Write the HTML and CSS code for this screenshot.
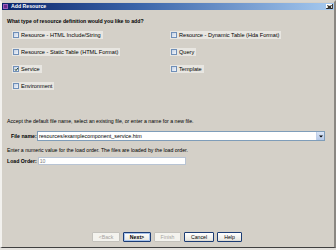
FILE: index.html
```html
<!DOCTYPE html>
<html>
<head>
<meta charset="utf-8">
<link rel="stylesheet" href="styles.css">
</head>
<body>
<div class="window">
  <div class="titlebar">
    <span class="app-icon"></span>
    <span class="title">Add Resource</span>
    <span class="close">
      <svg width="5" height="4" viewBox="0 0 5 4"><path d="M0.5 0.5 L4.5 3.5 M4.5 0.5 L0.5 3.5" stroke="#000" stroke-width="1"/></svg>
    </span>
  </div>
  <div class="content">
    <div class="heading">What type of resource definition would you like to add?</div>
    <div class="choices">
      <label class="choice"><span class="box"></span><span>Resource - HTML Include/String</span></label>
      <label class="choice"><span class="box"></span><span>Resource - Dynamic Table (Hda Format)</span></label>
      <label class="choice"><span class="box"></span><span>Resource - Static Table (HTML Format)</span></label>
      <label class="choice"><span class="box"></span><span>Query</span></label>
      <label class="choice"><span class="box checked"><svg width="5" height="5" viewBox="0 0 5 5"><path d="M1 2.3 L2 3.5 L4 1" stroke="#1f3f1f" stroke-width="1" fill="none"/></svg></span><span>Service</span></label>
      <label class="choice"><span class="box"></span><span>Template</span></label>
      <label class="choice"><span class="box"></span><span>Environment</span></label>
    </div>
    <div class="note note-file">Accept the default file name, select an existing file, or enter a name for a new file.</div>
    <div class="field-row file-row">
      <span class="field-label file-label">File name:</span>
      <div class="combo">
        <span class="combo-text">resources/examplecomponent_service.htm</span>
        <span class="combo-btn"><svg width="4" height="3" viewBox="0 0 4 3"><path d="M0 0.5 H4 L2 2.5 Z" fill="#000"/></svg></span>
      </div>
    </div>
    <div class="note note-order">Enter a numeric value for the load order. The files are loaded by the load order.</div>
    <div class="field-row order-row">
      <span class="field-label">Load Order:</span>
      <div class="order-input">10</div>
    </div>
    <div class="buttons">
      <button class="btn btn-back" disabled>&lt;Back</button>
      <button class="btn btn-next default">Next&gt;</button>
      <button class="btn btn-finish" disabled>Finish</button>
      <button class="btn btn-cancel">Cancel</button>
      <button class="btn btn-help">Help</button>
    </div>
  </div>
</div>
</body>
</html>
```
FILE: styles.css
```css
html, body {
  margin: 0;
  padding: 0;
}
body {
  width: 336px;
  height: 250px;
  overflow: hidden;
  background: #e4e2de;
  font-family: "Liberation Sans", Arial, sans-serif;
  font-size: 5.2px;
  color: #000;
}
.window {
  box-sizing: border-box;
  width: 336px;
  height: 248px;
  background: #d4d0c8;
  border-style: solid;
  border-width: 2px 2px 1px 2px;
  border-color: #d8d5cf #8a8782 #404040 #f2f1ee;
  padding-top: 1px;
  display: flex;
  flex-direction: column;
}
.titlebar {
  height: 7px;
  background: linear-gradient(to right, #0a246a 0%, #3a63a8 40%, #a6caf0 100%);
  display: flex;
  align-items: center;
  color: #fff;
}
.app-icon {
  width: 5px;
  height: 5px;
  margin-left: 1px;
  background: #6a2c8c;
  box-shadow: inset 0 0 0 1px #9a5cbc;
}
.title {
  margin-left: 3px;
  font-weight: bold;
  font-size: 5.2px;
  line-height: 7px;
}
.close {
  margin-left: auto;
  margin-right: 1px;
  width: 7px;
  height: 5px;
  background: #d4d0c8;
  box-shadow: inset -1px -1px 0 #404040, inset 1px 1px 0 #fff;
  display: flex;
  align-items: center;
  justify-content: center;
}
.close svg { display: block; }
.content {
  flex: 1;
  display: flex;
  flex-direction: column;
  padding: 0 0 5px 5px;
}
.heading {
  margin-top: 8px;
  line-height: 6px;
  font-weight: bold;
}
.choices {
  margin-top: 7px;
  padding-left: 5px;
  display: grid;
  grid-template-columns: 158px 1fr;
  row-gap: 9px;
  justify-items: start;
}
.choice {
  height: 8px;
  display: flex;
  align-items: center;
  background: #e8e6e1;
  padding: 0 2px 0 1px;
  line-height: 8px;
  font-size: 5.6px;
}
.box {
  box-sizing: border-box;
  width: 6px;
  height: 6px;
  margin-right: 2px;
  border: 1px solid #6f8fb8;
  background: linear-gradient(135deg, #c4d2e6, #f2f4f8);
  display: flex;
  align-items: center;
  justify-content: center;
}
.box svg { display: block; margin: -1px; }
.choices .choice:nth-child(7) { grid-column: 1; }
.note {
  line-height: 6px;
}
.note-file {
  margin-top: 28px;
}
.field-row {
  display: flex;
  align-items: center;
}
.file-row {
  margin-top: 7px;
  height: 10px;
}
.field-label {
  font-weight: bold;
}
.file-label {
  margin-left: 4px;
  width: 26px;
}
.combo {
  box-sizing: border-box;
  width: 288px;
  height: 10px;
  background: #fff;
  border: 1px solid #7f9db9;
  display: flex;
  align-items: center;
}
.combo-text {
  flex: 1;
  padding-left: 1px;
  line-height: 8px;
  font-size: 5.4px;
}
.combo-btn {
  width: 7px;
  height: 8px;
  background: linear-gradient(#dbe6f7, #b4c8e8);
  border-left: 1px solid #c2d0e8;
  display: flex;
  align-items: center;
  justify-content: center;
}
.combo-btn svg { display: block; }
.note-order {
  margin-top: 6px;
}
.order-row {
  margin-top: 4px;
  height: 8px;
}
.order-input {
  box-sizing: border-box;
  width: 148px;
  height: 8px;
  margin-left: 1px;
  background: #fff;
  border: 1px solid #b8c4d4;
  color: #808080;
  line-height: 6px;
  padding-left: 1px;
}
.buttons {
  margin-top: auto;
  display: flex;
  justify-content: center;
  gap: 3px;
  margin-right: 7px;
}
.btn {
  box-sizing: border-box;
  height: 10px;
  padding: 0;
  font-family: "Liberation Sans", Arial, sans-serif;
  font-size: 5.2px;
  line-height: 8px;
  color: #000;
  background: linear-gradient(#ffffff, #ecebe6 80%, #d8d6cf);
  border: 1px solid #1c3c74;
  border-radius: 1px;
}
.btn[disabled] {
  color: #a6a49e;
  border-color: #c4c2bc;
  background: #f4f3ee;
}
.btn.default {
  box-shadow: inset 0 0 0 1px #a8c4ec;
  font-weight: bold;
}
.btn-back { width: 28px; }
.btn-next { width: 28px; }
.btn-finish { width: 27px; }
.btn-cancel { width: 30px; }
.btn-help { width: 25px; }
```
